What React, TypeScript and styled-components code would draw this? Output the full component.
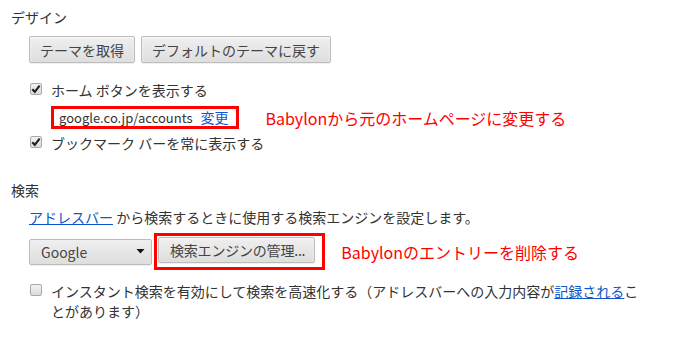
import React from "react";
import styled, { createGlobalStyle } from "styled-components";

const GlobalStyle = createGlobalStyle`
  html, body {
    margin: 0;
    padding: 0;
    background: #fff;
  }
  body {
    font-family: "Noto Sans CJK JP", "Noto Sans", sans-serif;
    font-size: 14px;
    color: #333;
  }
`;

const Page = styled.div`
  width: 677px;
  height: 337px;
  box-sizing: border-box;
  padding: 7px 31px 0 11px;
  overflow: hidden;
`;

const SectionTitle = styled.div<{ $top?: number }>`
  height: 20px;
  line-height: 20px;
  margin-top: ${(p) => p.$top ?? 0}px;
  color: #303030;
`;

const Body = styled.div`
  padding-left: 18px;
`;

const Row = styled.div<{ $top: number; $indent?: number }>`
  display: flex;
  align-items: center;
  margin-top: ${(p) => p.$top}px;
  padding-left: ${(p) => p.$indent ?? 0}px;
`;

const Button = styled.button`
  height: 27px;
  box-sizing: border-box;
  padding: 0 10px;
  margin-right: 6px;
  font: inherit;
  font-size: 14px;
  color: #444;
  border: 1px solid #bcbcbc;
  border-radius: 2px;
  background: linear-gradient(#efefef, #dedede);
  box-shadow: 0 1px 0 rgba(0, 0, 0, 0.06), inset 0 1px 2px rgba(255, 255, 255, 0.75);
  line-height: 24px;
  white-space: nowrap;
`;

const SelectBox = styled.div`
  width: 123px;
  height: 26px;
  box-sizing: border-box;
  display: flex;
  align-items: center;
  justify-content: space-between;
  padding: 0 6px 0 11px;
  color: #444;
  border: 1px solid #bcbcbc;
  border-radius: 2px;
  background: linear-gradient(#efefef, #dedede);
  box-shadow: 0 1px 0 rgba(0, 0, 0, 0.06);
  margin-right: 2px;
`;

const ManageButton = styled(Button)`
  height: 26px;
  line-height: 23px;
  margin: 0;
  padding: 0 9px 0 11px;
  letter-spacing: -0.2px;
`;

const Highlight = styled.div<{ $pad: string }>`
  border: 3px solid #f00;
  padding: ${(p) => p.$pad};
  display: flex;
  align-items: center;
  white-space: nowrap;
`;

const Note = styled.span<{ $left: number; $down?: number }>`
  color: #f00;
  font-size: 16px;
  margin-left: ${(p) => p.$left}px;
  position: relative;
  top: ${(p) => p.$down ?? 0}px;
  white-space: nowrap;
`;

const CheckRow = styled.label<{ $top: number }>`
  display: flex;
  align-items: flex-start;
  margin-top: ${(p) => p.$top}px;
  line-height: 20px;
  padding-left: 1px;
`;

const Box = styled.span`
  flex: none;
  width: 12px;
  height: 12px;
  box-sizing: border-box;
  margin-top: 3px;
  margin-right: 9px;
  border: 1px solid #a9a9a9;
  border-radius: 2px;
  background: linear-gradient(#f2f2f2, #dcdcdc);
  display: flex;
  align-items: center;
  justify-content: center;
`;

const Link = styled.a`
  color: #15c;
  text-decoration: underline;
`;

const PlainLink = styled.a`
  color: #15c;
  text-decoration: none;
  margin-left: 8px;
  font-size: 14px;
`;

const HomeUrl = styled.span`
  color: #333;
  font-size: 13px;
`;

const Check = ({ on }: { on: boolean }) => (
  <Box>
    {on && (
      <svg width="10" height="10" viewBox="0 0 10 10">
        <path d="M1.3 5.2 L3.8 7.8 L8.6 1.6" fill="none" stroke="#222" strokeWidth="2.2" />
      </svg>
    )}
  </Box>
);

export default function App() {
  return (
    <>
      <GlobalStyle />
      <Page>
        <SectionTitle>デザイン</SectionTitle>
        <Body>
          <Row $top={9}>
            <Button>テーマを取得</Button>
            <Button>デフォルトのテーマに戻す</Button>
          </Row>
          <CheckRow $top={17}>
            <Check on />
            <span>ホーム ボタンを表示する</span>
          </CheckRow>
          <Row $top={5} $indent={22}>
            <Highlight $pad="0 8px 0 5px" style={{ height: 23, boxSizing: "border-box" }}>
              <HomeUrl>google.co.jp/accounts</HomeUrl>
              <PlainLink>変更</PlainLink>
            </Highlight>
            <Note $left={26} $down={1}>Babylonから元のホームページに変更する</Note>
          </Row>
          <CheckRow $top={4}>
            <Check on />
            <span>ブックマーク バーを常に表示する</span>
          </CheckRow>
        </Body>
        <SectionTitle $top={27}>検索</SectionTitle>
        <Body>
          <Row $top={7} style={{ lineHeight: "20px" }}>
            <span>
              <Link>アドレスバー</Link> から検索するときに使用する検索エンジンを設定します。
            </span>
          </Row>
          <Row $top={6}>
            <SelectBox>
              <span>Google</span>
              <svg width="9" height="5" viewBox="0 0 9 5">
                <path d="M0.5 0 H8.5 L4.5 4.5 Z" fill="#111" />
              </svg>
            </SelectBox>
            <Highlight $pad="1px 7px 4px 1px">
              <ManageButton>検索エンジンの管理...</ManageButton>
            </Highlight>
            <Note $left={16}>Babylonのエントリーを削除する</Note>
          </Row>
          <CheckRow $top={11}>
            <Check on={false} />
            <span>
              インスタント検索を有効にして検索を高速化する（アドレスバーへの入力内容が<Link>記録される</Link>ことがあります）
            </span>
          </CheckRow>
        </Body>
      </Page>
    </>
  );
}
